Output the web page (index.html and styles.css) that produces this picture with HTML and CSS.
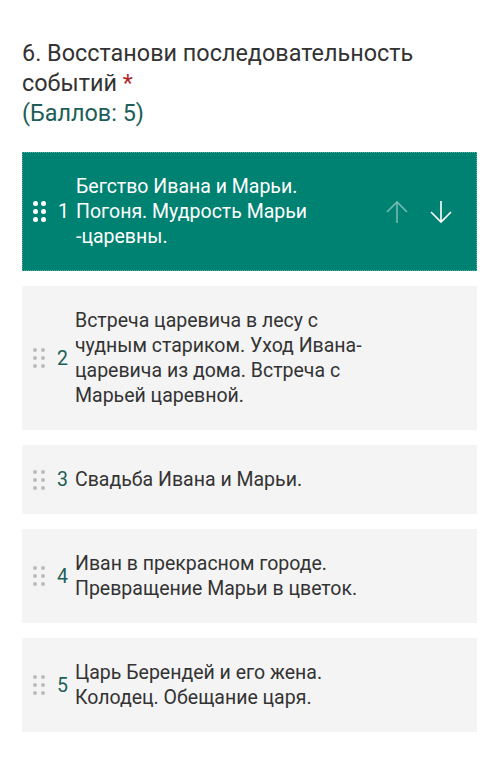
FILE: index.html
```html
<!DOCTYPE html>
<html lang="ru">
<head>
<meta charset="utf-8">
<link rel="stylesheet" href="styles.css">
</head>
<body>
<div class="question">
  <div class="title-line">6. Восстанови последовательность</div>
  <div class="title-line"><span>событий</span> <span class="req">*</span></div>
  <div class="points">(Баллов: 5)</div>
</div>
<div class="list">
  <div class="card active">
    <div class="handle"><i></i><i></i><i></i><i></i><i></i><i></i></div>
    <div class="num">1</div>
    <div class="text">Бегство Ивана и Марьи. Погоня. Мудрость Марьи -царевны.</div>
    <div class="arrows">
      <svg class="up" width="28" height="28" viewBox="0 0 28 28"><path d="M14 25V4M4 14L14 4L24 14" fill="none" stroke="currentColor" stroke-width="1.6"/></svg>
      <svg class="down" width="28" height="28" viewBox="0 0 28 28"><path d="M14 3V24M4 14L14 24L24 14" fill="none" stroke="currentColor" stroke-width="1.6"/></svg>
    </div>
  </div>
  <div class="card">
    <div class="handle"><i></i><i></i><i></i><i></i><i></i><i></i></div>
    <div class="num">2</div>
    <div class="text">Встреча царевича в лесу с чудным стариком. Уход Ивана-царевича из дома. Встреча с Марьей царевной.</div>
  </div>
  <div class="card">
    <div class="handle"><i></i><i></i><i></i><i></i><i></i><i></i></div>
    <div class="num">3</div>
    <div class="text">Свадьба Ивана и Марьи.</div>
  </div>
  <div class="card">
    <div class="handle"><i></i><i></i><i></i><i></i><i></i><i></i></div>
    <div class="num">4</div>
    <div class="text">Иван в прекрасном городе. Превращение Марьи в цветок.</div>
  </div>
  <div class="card">
    <div class="handle"><i></i><i></i><i></i><i></i><i></i><i></i></div>
    <div class="num">5</div>
    <div class="text">Царь Берендей и его жена. Колодец. Обещание царя.</div>
  </div>
</div>
</body>
</html>
```
FILE: styles.css
```css
html, body {
  margin: 0;
  background: #fff;
}
body {
  font-family: Roboto, "Noto Sans", sans-serif;
  color: #333;
  padding: 38px 23px 0 22px;
}
.question {
  font-size: 23.4px;
  line-height: 30px;
  color: #333;
  margin-bottom: 24px;
}
.title-line {
  white-space: nowrap;
}
.req {
  color: #b0262c;
}
.points {
  color: #1d5e57;
}
.list {
  display: flex;
  flex-direction: column;
  gap: 15px;
}
.card {
  display: flex;
  align-items: center;
  background: #f4f4f4;
  padding: 22px 16px 22px 11px;
  font-size: 19.5px;
  line-height: 25px;
}
.card.active {
  background: #008272;
  color: #fff;
  outline: 1px dotted #5fa89e;
  outline-offset: -1px;
}
.handle {
  display: grid;
  grid-template-columns: 4px 4px;
  grid-template-rows: 4px 4px 4px;
  column-gap: 4px;
  row-gap: 4px;
  flex: none;
}
.handle i {
  display: block;
  width: 4px;
  height: 4px;
  border-radius: 50%;
  background: #bbbbbb;
}
.active .handle {
  grid-template-columns: 5px 5px;
  grid-template-rows: 5px 5px 5px;
  column-gap: 3px;
  row-gap: 3px;
}
.active .handle i {
  background: #fff;
  width: 5px;
  height: 5px;
}
.num {
  flex: none;
  margin-left: 12px;
  width: 18px;
  color: #1d5e57;
}
.active .num {
  color: #fff;
}
.text {
  flex: 1;
  padding-right: 78px;
}
.active .text {
  padding-right: 45px;
}
.arrows {
  display: flex;
  gap: 16px;
  align-items: center;
  flex: none;
  margin-right: 6px;
}
.arrows svg {
  display: block;
}
.arrows .up {
  color: rgba(255, 255, 255, 0.45);
}
.arrows .down {
  color: #fff;
}
```
